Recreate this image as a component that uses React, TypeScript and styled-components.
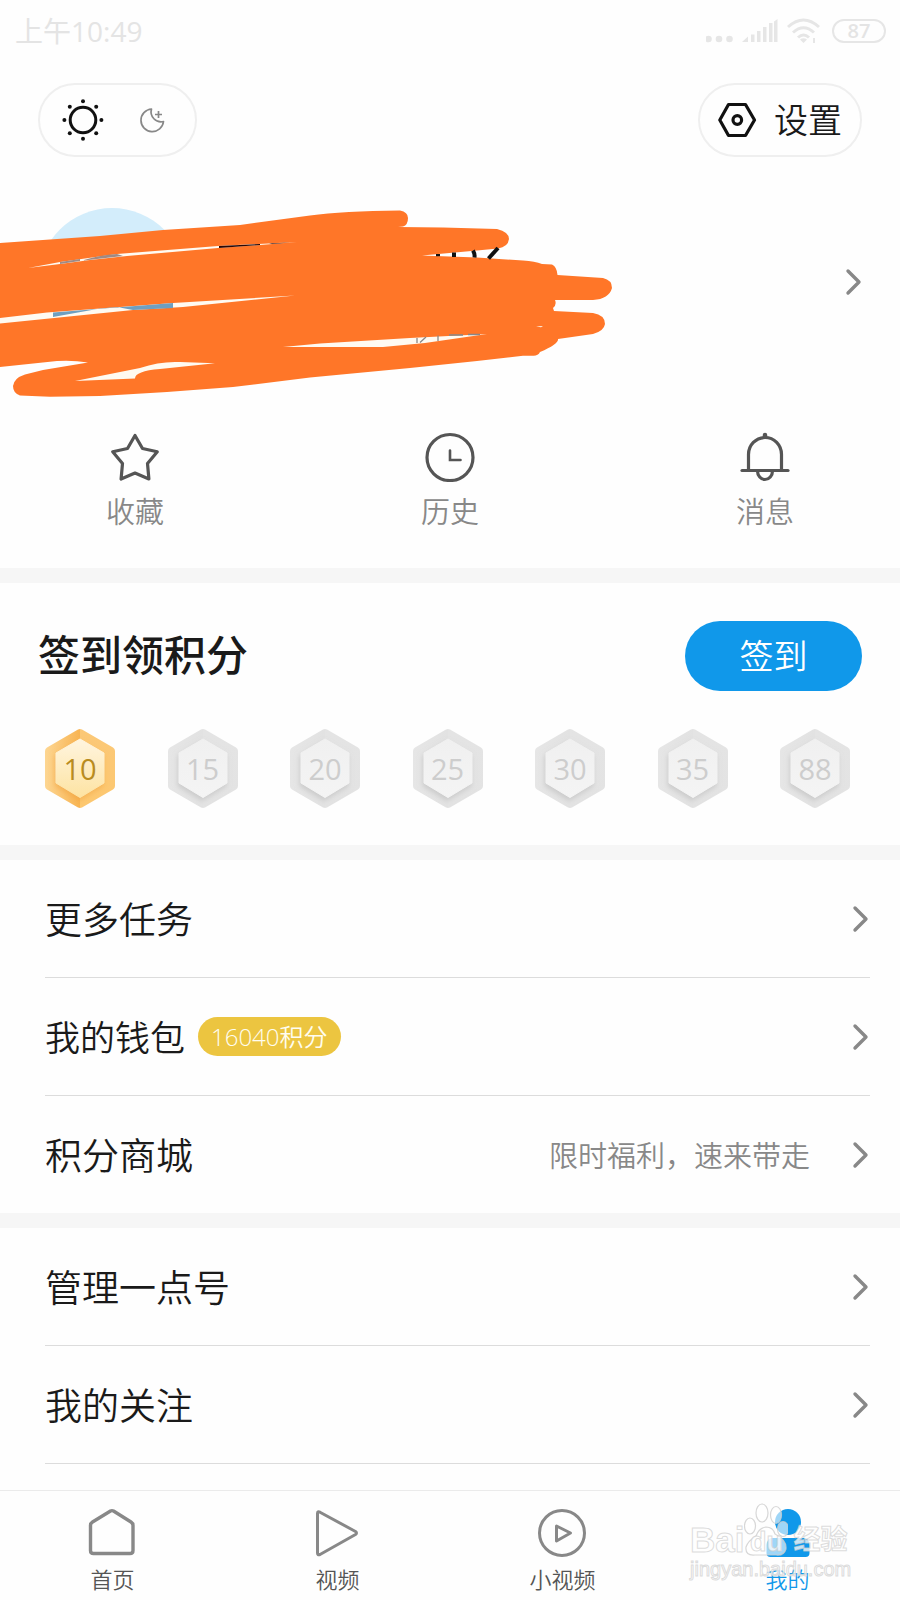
import React from "react";
import styled, { createGlobalStyle } from "styled-components";

const GlobalStyle = createGlobalStyle`
  *, *::before, *::after { box-sizing: border-box; }
  body {
    margin: 0;
    background: #fefefe;
    color: #1a1a1a;
    font-family: "Open Sans", "Noto Sans CJK SC", sans-serif;
    font-weight: 350;
  }
  button { font: inherit; color: inherit; background: none; border: 0; padding: 0; cursor: pointer; }
  a { color: inherit; text-decoration: none; }
  svg { display: block; }
`;

const Page = styled.div`
  display: flex;
  flex-direction: column;
  min-height: 100vh;
`;

const Main = styled.main`
  flex: 1;
  overflow: hidden;
`;

const StatusBar = styled.div`
  display: flex;
  align-items: center;
  justify-content: space-between;
  height: 62px;
  padding: 0 14px 0 15px;
  color: #e4e4e4;
  font-size: 28px;
  line-height: 40px;
  font-weight: 400;
`;

const StatusIcons = styled.div`
  display: flex;
  align-items: center;
  gap: 12px;
`;

const Battery = styled.span`
  width: 54px;
  height: 24px;
  border: 2px solid #e6e6e6;
  border-radius: 12px;
  font-size: 20px;
  line-height: 20px;
  font-weight: 600;
  text-align: center;
`;

const Header = styled.header`
  display: flex;
  justify-content: space-between;
  padding: 21px 38px 0;
`;

const ThemeSwitch = styled.div`
  display: flex;
  align-items: center;
  gap: 30px;
  height: 74px;
  padding: 0 24px 0 22px;
  border: 2px solid #efefef;
  border-radius: 37px;
`;

const SettingsButton = styled.button`
  && {
    display: flex;
    align-items: center;
    gap: 16px;
    height: 74px;
    padding: 0 18px;
    border: 2px solid #efefef;
    border-radius: 37px;
    font-size: 34px;
    line-height: 48px;
  }
`;

const Profile = styled.a`
  position: relative;
  display: flex;
  align-items: center;
  justify-content: space-between;
  padding: 51px 38px 76px;
`;

const Avatar = styled.span`
  width: 148px;
  height: 148px;
  border-radius: 50%;
  background: #d3edfb;
`;

const Scribble = styled.svg`
  position: absolute;
  left: 0;
  top: 43px;
`;

const QuickActions = styled.nav`
  display: flex;
  justify-content: space-between;
  padding: 0 90px 36px;
`;

const QuickAction = styled.a`
  display: flex;
  flex-direction: column;
  align-items: center;
  gap: 10px;
  width: 90px;
  color: #888;
  font-size: 29px;
  line-height: 40px;
`;

const Band = styled.div`
  height: 15px;
  background: #f6f6f6;
`;

const CheckIn = styled.section`
  padding: 38px 38px 37px;
`;

const CheckInHead = styled.div`
  display: flex;
  align-items: center;
  justify-content: space-between;
`;

const Title = styled.h2`
  margin: 0;
  padding-bottom: 2px;
  font-size: 42px;
  line-height: 60px;
  font-weight: 500;
`;

const CheckInButton = styled.button`
  && {
    width: 177px;
    height: 70px;
    border-radius: 35px;
    background: #1098ea;
    color: #fff;
    font-size: 34px;
    line-height: 48px;
  }
`;

const Days = styled.ol`
  display: flex;
  justify-content: space-between;
  list-style: none;
  margin: 38px 0 0;
  padding: 0 12px 0 7px;
`;

const Day = styled.li<{ $active?: boolean }>`
  display: grid;
  place-items: center;
  width: 70px;
  height: 79px;
  color: ${(p) => (p.$active ? "#b98c1e" : "#cdcdcd")};
  font-size: 29px;
  line-height: 42px;
  font-weight: 400;

  > * { grid-area: 1 / 1; }
`;

const DayValue = styled.span``;

const List = styled.ul`
  list-style: none;
  margin: 0;
  padding: 0 30px 0 45px;
`;

const Item = styled.li<{ $line?: boolean }>`
  border-bottom: ${(p) => (p.$line ? "1px solid #dcdcdc" : "0")};
`;

const ItemLink = styled.a`
  display: flex;
  align-items: center;
  height: 117px;
`;

const ItemLabel = styled.span<{ $small?: boolean }>`
  padding-top: 2px;
  font-size: ${(p) => (p.$small ? 35 : 37)}px;
  line-height: 52px;
`;

const Points = styled.span`
  margin-left: 13px;
  padding: 0 13px;
  border-radius: 20px;
  background: #ecc540;
  color: #fffdf0;
  font-size: 24px;
  line-height: 39px;
`;

const Hint = styled.span`
  margin: 0 42px 0 auto;
  padding-top: 2px;
  color: #888;
  font-size: 29px;
  line-height: 40px;

  & + svg { margin-left: 0; }
`;

const ListArrow = styled.svg`
  margin-left: auto;
  margin-right: 1px;
`;

const TabBar = styled.nav`
  position: sticky;
  bottom: 0;
  display: grid;
  grid-template-columns: repeat(4, 1fr);
  margin-top: 26px;
  padding: 17px 0 6px;
  border-top: 1px solid #ebebeb;
  background: #fefefe;
`;

const Tab = styled.a<{ $active?: boolean }>`
  display: flex;
  flex-direction: column;
  align-items: center;
  gap: 6px;
  color: ${(p) => (p.$active ? "#1098ea" : "#555")};
  font-size: 22px;
  line-height: 30px;
`;

const Watermark = styled.div`
  position: absolute;
  right: 46px;
  bottom: 20px;
  width: 164px;
  pointer-events: none;
  color: rgba(255, 255, 255, 0.75);
  font-family: "Liberation Sans", "Noto Sans CJK SC", sans-serif;
  font-weight: 700;
  -webkit-text-stroke: 1px rgba(205, 205, 205, 0.7);
`;

const WatermarkBrand = styled.div`
  display: flex;
  align-items: flex-end;
  height: 56px;
`;

const Bai = styled.span`
  font-size: 35px;
  line-height: 36px;
`;

const Paw = styled.span`
  display: grid;
  justify-items: center;
  align-items: end;
  height: 56px;
  font-size: 27px;
  line-height: 32px;

  > * { grid-area: 1 / 1; }
`;

const Jingyan = styled.span`
  margin-left: 5px;
  font-size: 27px;
  line-height: 36px;
`;

const WatermarkSite = styled.div`
  font-size: 20px;
  line-height: 22px;
  font-weight: 400;
`;

const Arrow = ({ list }: { list?: boolean }) => {
  const path = <path d="M3 3 L14 14 L3 25" fill="none" stroke="#888" strokeWidth="3.400" strokeLinecap="round" strokeLinejoin="round" />;
  return list ? (
    <ListArrow width="17" height="28" viewBox="0 0 17 28" aria-hidden="true">{path}</ListArrow>
  ) : (
    <svg width="17" height="28" viewBox="0 0 17 28" aria-hidden="true">{path}</svg>
  );
};

const SunIcon = () => (
  <svg width="42" height="42" viewBox="0 0 42 42">
    <circle cx="21" cy="21" r="12.8" fill="none" stroke="#111" strokeWidth="3" />
    {[[21, 2.2], [34.2, 7.8], [39.4, 21], [34.2, 34.2], [21, 39.8], [7.8, 34.2], [2.4, 21], [7.8, 7.8]].map(([x, y]) => (
      <circle key={`${x}-${y}`} cx={x} cy={y} r="2" fill="#111" />
    ))}
  </svg>
);

const MoonIcon = () => (
  <svg width="37" height="30" viewBox="0 0 37 30" fill="none" stroke="#888" strokeWidth="1.7" strokeLinejoin="round">
    <path d="M17.500 4 A11.300 11.300 0 1 0 29.500 16.500 A10 10 0 0 1 17.500 4 Z" />
    <path d="M24.500 6 V13 M21 9.500 H28" />
  </svg>
);

const GearIcon = () => (
  <svg width="40" height="38" viewBox="0 0 40 38" fill="none" stroke="#111" strokeWidth="3.200">
    <path d="M10.500 3.500 H27.500 L36.500 19 L27.500 34.500 H10.500 L1.800 19 Z" strokeLinejoin="round" />
    <circle cx="19.300" cy="19" r="4.300" />
  </svg>
);

const StarIcon = () => (
  <svg width="50" height="50" viewBox="0 0 50 50" fill="none" stroke="#555" strokeWidth="3.200" strokeLinejoin="round">
    <path d="M25 3.500 L32.500 16.500 L47.300 19.800 L37.500 31.500 L38.900 47 L25 41 L11.100 47 L12.500 31.500 L2.700 19.800 L17.500 16.500 Z" />
  </svg>
);

const ClockIcon = () => (
  <svg width="50" height="50" viewBox="0 0 50 50" fill="none" stroke="#555" strokeLinecap="round">
    <circle cx="25" cy="25.500" r="23" strokeWidth="3.200" />
    <path d="M25 18.500 V28 H35.500" strokeWidth="2.600" />
  </svg>
);

const BellIcon = () => (
  <svg width="50" height="50" viewBox="0 0 50 50" fill="none" stroke="#555" strokeWidth="3.200" strokeLinecap="round">
    <path d="M2 38.500 H48" />
    <path d="M8.500 37 V22.500 A16.500 17 0 0 1 41.500 22.500 V37" />
    <path d="M25 3 V4.500" strokeWidth="4.500" />
    <path d="M17.500 39 A7.500 8.500 0 0 0 32.500 39" />
  </svg>
);

const Hexagon = ({ active }: { active?: boolean }) => {
  const id = active ? "gold" : "grey";
  return (
    <svg width="70" height="79" viewBox="0 0 70 79" aria-hidden="true">
      <defs>
        <linearGradient id={`${id}-left`} x1="0" y1="0" x2="1" y2="0">
          <stop offset="0" stopColor={active ? "#fdd692" : "#e6e6e6"} />
          <stop offset="1" stopColor={active ? "#f8b452" : "#e2e2e2"} />
        </linearGradient>
        <linearGradient id={`${id}-right`} x1="0" y1="0" x2="0" y2="1">
          <stop offset="0" stopColor={active ? "#fbc877" : "#e4e4e4"} />
          <stop offset="1" stopColor={active ? "#fdc870" : "#e3e3e3"} />
        </linearGradient>
        <linearGradient id={`${id}-core`} x1="0" y1="0" x2="0" y2="1">
          <stop offset="0" stopColor={active ? "#fff5df" : "#f0f0f0"} />
          <stop offset="1" stopColor={active ? "#fde3a2" : "#f4f4f4"} />
        </linearGradient>
        <filter id={`${id}-shade`} x="-20%" y="-20%" width="140%" height="140%">
          <feDropShadow dx="-1" dy="3" stdDeviation="2.500" floodColor={active ? "#f0a23c" : "#b4b4b4"} floodOpacity="0.5" />
        </filter>
      </defs>
      <path d="M35 0 L33 0.600 L2 18.500 Q0 19.500 0 22 V57 Q0 59.500 2 60.500 L33 78.400 L35 79 Z" fill={`url(#${id}-left)`} />
      <path d="M35 0 L37 0.600 L68 18.500 Q70 19.500 70 22 V57 Q70 59.500 68 60.500 L37 78.400 L35 79 Z" fill={`url(#${id}-right)`} />
      <path d="M35 10 L59 24 V54 L35 68.500 L11 54 V24 Z" fill={`url(#${id}-core)`} stroke={`url(#${id}-core)`} strokeWidth="1" strokeLinejoin="round" filter={`url(#${id}-shade)`} />
    </svg>
  );
};

const HomeIcon = () => (
  <svg width="50" height="50" viewBox="0 0 50 50" fill="none" stroke="#888" strokeWidth="3.400" strokeLinejoin="round">
    <path d="M22.500 3 Q24 2.200 25.500 3 L43 14 Q45 15.200 45 17.500 V42.500 Q45 45.500 42 45.500 H5.500 Q2.500 45.500 2.500 42.500 V17.500 Q2.500 15.200 4.500 14 Z" />
  </svg>
);

const VideoIcon = () => (
  <svg width="50" height="50" viewBox="0 0 50 50" fill="none" stroke="#888" strokeWidth="3" strokeLinejoin="round">
    <path d="M4.500 5.500 Q4.500 3 7 4.200 L42.500 23.500 Q44.500 25 42.500 26.500 L7 46.500 Q4.500 47.500 4.500 45 Z" />
  </svg>
);

const ClipIcon = () => (
  <svg width="50" height="50" viewBox="0 0 50 50" fill="none" stroke="#888" strokeWidth="3" strokeLinejoin="round">
    <circle cx="24" cy="25" r="22.500" />
    <path d="M18.500 18 L32.500 25 L18.500 33 Z" />
  </svg>
);

const MeIcon = () => (
  <svg width="50" height="50" viewBox="0 0 50 50" fill="#1098ea">
    <circle cx="25" cy="14" r="13" />
    <path d="M8 30 H42 Q46.500 32 46.500 37 V45 Q46.500 49 42.500 49 H7.500 Q3.500 49 3.500 45 V37 Q3.500 32 8 30 Z" />
  </svg>
);

const SignalIcons = () => (
  <svg width="114" height="28" viewBox="0 0 114 28" fill="#e6e6e6">
    <circle cx="2.500" cy="22" r="3.300" />
    <circle cx="13" cy="22" r="3.300" />
    <circle cx="23.500" cy="22" r="3.300" />
    <path d="M36 25 L42 19.500 V25 Z M45 17.500 h3.500 V25 h-3.500 Z M51 14 h3.500 V25 h-3.500 Z M57 10 h3.500 V25 h-3.500 Z M63 6 h3.500 V25 h-3.500 Z M68 4.500 L71.500 2 V25 h-3.500 Z" />
    <g fill="none" stroke="#e6e6e6" strokeWidth="3">
      <path d="M82 10 Q97.500 -4 113 10" />
      <path d="M87 15.500 Q97.500 6 108 15.500" />
      <path d="M92 20.500 Q97.500 15.500 103 20.500" />
    </g>
    <path d="M94 22.500 Q97.500 20 101 22.500 L97.500 26 Z M107 21 h2 v5 h-2 Z" />
  </svg>
);

/* Marker strokes that cover the avatar, the user name and the account line. */
const MarkerScribble = () => (
  <Scribble width="620" height="200" viewBox="0 200 620 200" aria-hidden="true">
    <path
      fill="#ff7628"
      d="M0 243 L100 236 L163 230 L240 225 L310 215.500 Q343 211 400 210.500 Q408 212 408 218 Q408 225 403 226.500 L398 227 L443 227.500 L497 229 Q509 232 509 239 Q508 247 498 248.500 L477 250.500 L422 255.500 L477 257.500 L523 260.500 Q535 261 542 264 L552 264.500 Q557 267 557.500 275 L603 278 Q612 280 612 288 Q609 299 593 300 L555 300 Q557 305 553 308 L554 311 L593 313 Q605 315 605 324 Q604 331 593 334 L558 339 Q559 344 540 352 Q538 356 533 355.700 L523 355.700 L477 361 L410 368 L310 377.500 L233 387 L167 392 L100 396 L50 396.700 L20 395.500 Q13 393 13 386 Q14 378 25 374.500 L43 370 L88 362.500 Q73 360 57 361 L0 367 Z"
    />
    <g fill="#fffaf1">
      <path d="M0 318 L47 312.500 L173 303 L295 295.500 L183 307 L133 310 L0 323.500 Z" />
      <path d="M28 268 L60 262 L117 254 L218 246 L297 242 L260 245 L218 248 L127 256 L90 260 L60 264 Z" />
      <path d="M75 381 L140 368 Q160 361 180 362 L215 363.300 L160 369 Q135 371 135 378.500 Z" />
      <path d="M283 347 L320 343.500 L410 338 L487 334 L425 343 L383 347 Z" />
      <path d="M536 326.500 L543 326 L541 327.300 Z" />
    </g>
    <path d="M53 312.500 L173 303 V308 L133 310 L117 307 L100 308.500 L53 317 Z" fill="#6f9fc0" />
    <path d="M60 262 L80 259 L80 261 L60 264 Z M84 260 Q100 255 117 254 L123 256 L84 260.500 Z" fill="#a08a84" />
    <path d="M219 246 L260 244 V245 L219 248 Z M269 243.500 L290 242.500 L272 244 Z" fill="#2a0806" />
    <g fill="none" stroke="#111">
      <path d="M438 254 V256.300 M454 252.500 V257 M473 250.500 Q475 254 474.500 257.500" strokeWidth="4" />
      <path d="M498 248 L488.500 258.500" strokeWidth="4" />
    </g>
    <path d="M417 338 V343 M426 337 L420 342.500 M438 335.500 V341 M449 335 H463 M468 334.500 H480" fill="none" stroke="#888" strokeWidth="1.300" />
  </Scribble>
);

const PawIcon = () => (
  <svg width="44" height="56" viewBox="0 0 44 56" fill="rgba(255,255,255,0.6)" stroke="rgba(205,205,205,0.8)" strokeWidth="1.200">
    <ellipse cx="6" cy="24" rx="5.500" ry="8" />
    <ellipse cx="18" cy="11" rx="6" ry="9" />
    <ellipse cx="32" cy="13" rx="5.500" ry="8.500" />
    <ellipse cx="39" cy="27" rx="5.500" ry="7.500" />
    <path d="M22 25 Q29 25 31 32 Q43 38 42 47 Q40 54 32 53 H11 Q1 54 2 45 Q4 39 12 34 Q15 26 22 25 Z" />
  </svg>
);

const quickActions = [
  { label: "收藏", icon: <StarIcon /> },
  { label: "历史", icon: <ClockIcon /> },
  { label: "消息", icon: <BellIcon /> },
];

const days = [10, 15, 20, 25, 30, 35, 88];

const tabs = [
  { label: "首页", icon: <HomeIcon /> },
  { label: "视频", icon: <VideoIcon /> },
  { label: "小视频", icon: <ClipIcon /> },
  { label: "我的", icon: <MeIcon />, active: true },
];

export default function App() {
  return (
    <Page>
      <GlobalStyle />
      <StatusBar>
        <span>上午10:49</span>
        <StatusIcons>
          <SignalIcons />
          <Battery>87</Battery>
        </StatusIcons>
      </StatusBar>
      <Main>
        <Header>
          <ThemeSwitch role="group" aria-label="主题">
            <button type="button" aria-label="日间模式"><SunIcon /></button>
            <button type="button" aria-label="夜间模式"><MoonIcon /></button>
          </ThemeSwitch>
          <SettingsButton type="button">
            <GearIcon />
            设置
          </SettingsButton>
        </Header>
        <Profile href="#profile" aria-label="个人主页">
          <Avatar />
          <Arrow />
          <MarkerScribble />
        </Profile>
        <QuickActions>
          {quickActions.map((action) => (
            <QuickAction key={action.label} href="#quick">
              {action.icon}
              {action.label}
            </QuickAction>
          ))}
        </QuickActions>
        <Band />
        <CheckIn>
          <CheckInHead>
            <Title>签到领积分</Title>
            <CheckInButton type="button">签到</CheckInButton>
          </CheckInHead>
          <Days>
            {days.map((value, index) => (
              <Day key={value} $active={index === 0}>
                <Hexagon active={index === 0} />
                <DayValue>{value}</DayValue>
              </Day>
            ))}
          </Days>
        </CheckIn>
        <Band />
        <List>
          <Item $line>
            <ItemLink href="#tasks">
              <ItemLabel>更多任务</ItemLabel>
              <Arrow list />
            </ItemLink>
          </Item>
          <Item $line>
            <ItemLink href="#wallet">
              <ItemLabel $small>我的钱包</ItemLabel>
              <Points>16040积分</Points>
              <Arrow list />
            </ItemLink>
          </Item>
          <Item>
            <ItemLink href="#mall">
              <ItemLabel>积分商城</ItemLabel>
              <Hint>限时福利，速来带走</Hint>
              <Arrow list />
            </ItemLink>
          </Item>
        </List>
        <Band />
        <List>
          <Item $line>
            <ItemLink href="#account">
              <ItemLabel>管理一点号</ItemLabel>
              <Arrow list />
            </ItemLink>
          </Item>
          <Item $line>
            <ItemLink href="#following">
              <ItemLabel>我的关注</ItemLabel>
              <Arrow list />
            </ItemLink>
          </Item>
        </List>
      </Main>
      <TabBar>
        {tabs.map((tab) => (
          <Tab key={tab.label} href="#tab" $active={tab.active}>
            {tab.icon}
            {tab.label}
          </Tab>
        ))}
        <Watermark>
          <WatermarkBrand>
            <Bai>Bai</Bai>
            <Paw>
              <PawIcon />
              <span>du</span>
            </Paw>
            <Jingyan>经验</Jingyan>
          </WatermarkBrand>
          <WatermarkSite>jingyan.baidu.com</WatermarkSite>
        </Watermark>
      </TabBar>
    </Page>
  );
}
